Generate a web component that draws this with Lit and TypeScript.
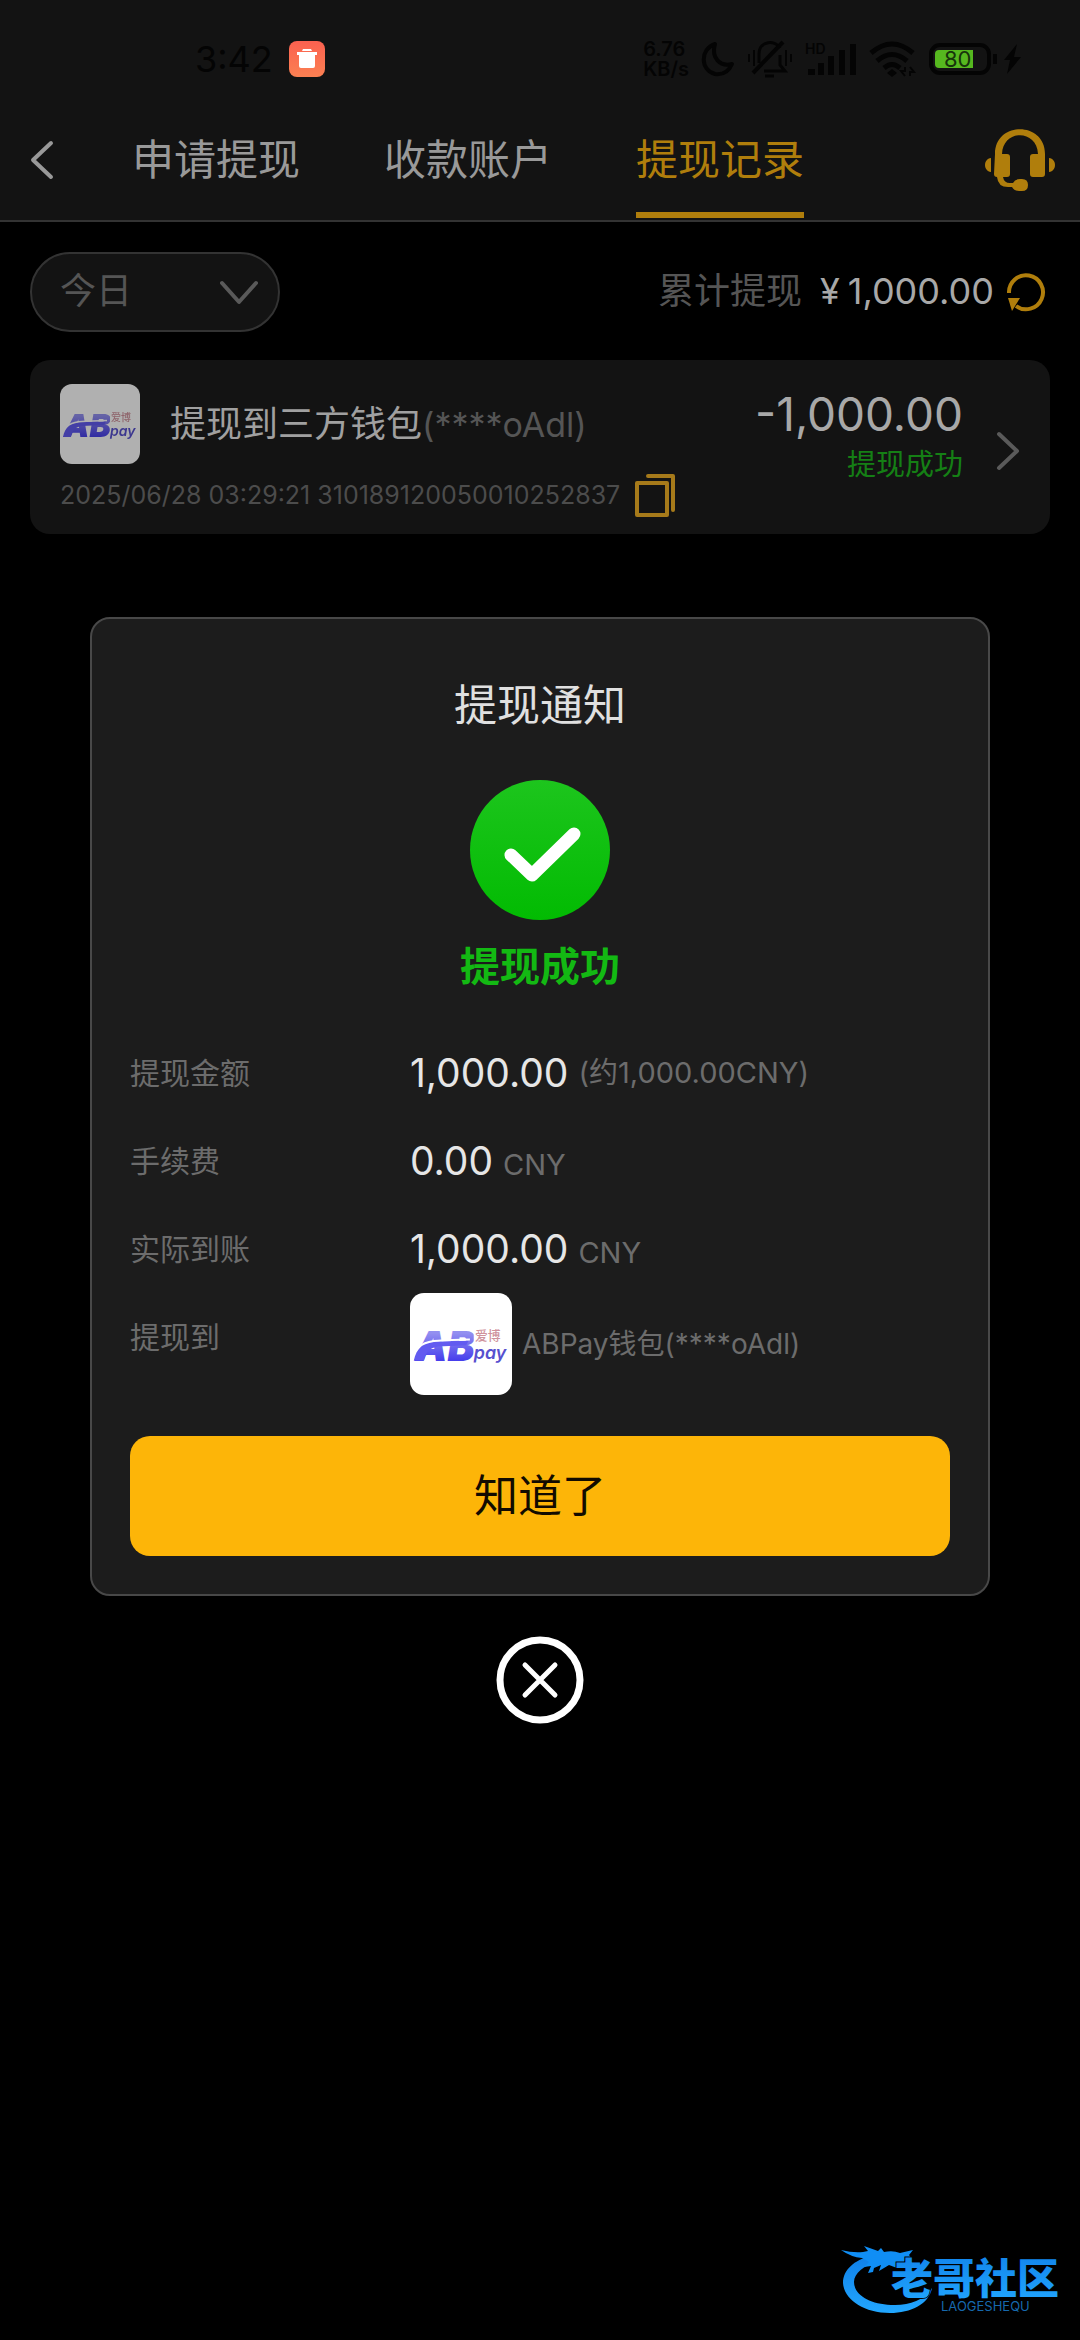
import { LitElement, html, css, nothing } from "lit";
import { customElement, property, state } from "lit/decorators.js";

/** Wallet brand tile. */
@customElement("wallet-logo")
class WalletLogo extends LitElement {
  static styles = css`
    :host { display: block; overflow: hidden; background: #fff; }
    svg { display: block; width: 100%; height: 100%; }
    .latin { font-family: "Inter", "Liberation Sans", sans-serif; font-style: italic; }
    .han { font-family: "Noto Sans CJK SC", sans-serif; }
  `;
  render() {
    return html`<svg viewBox="0 0 80 80" role="img" aria-label="ABPay">
      <defs>
        <linearGradient id="g" x1="0" y1="0" x2="0" y2="1">
          <stop offset="0.25" stop-color="#938ff0" />
          <stop offset="0.8" stop-color="#463eec" />
        </linearGradient>
      </defs>
      <text class="latin" x="4" y="53" font-size="32" font-weight="900" fill="url(#g)">AB</text>
      <path d="M3 53C5 43 11 38.500 20 38L46 37.500 44 41 22 42C15 43 12 47 11 53Z" fill="#625bf0" />
      <path d="M7 42.500C13 36.500 24 37 47 36.500" fill="none" stroke="#fff" stroke-width="1.500" />
      <rect x="50" y="24" width="27" height="34" fill="#fff" />
      <text class="han" x="51" y="37" font-size="10" font-weight="500" fill="#cf929c">爱博</text>
      <text class="latin" x="50" y="52" font-size="14" font-weight="600" fill="#5750cf">pay</text>
    </svg>`;
  }
}

interface Detail { label: string; value?: string; note: string; centred?: boolean; logo?: boolean; }

const TABS = ["申请提现", "收款账户", "提现记录"];

const DETAILS: Detail[] = [
  { label: "提现金额", value: "1,000.00", note: "(约1,000.00CNY)", centred: true },
  { label: "手续费", value: "0.00", note: "CNY" },
  { label: "实际到账", value: "1,000.00", note: "CNY" },
  { label: "提现到", note: "ABPay钱包(****oAdl)", logo: true },
];

@customElement("status-bar")
class StatusBar extends LitElement {
  static styles = css`
    :host {
      display: flex; align-items: center; height: 82px; padding: 18px 57px 0 195px;
      color: #040404; font-family: "Inter", sans-serif;
    }
    .time { font-size: 36px; line-height: 40px; }
    .app { width: 36px; height: 36px; margin-left: 16px; }
    .icons { display: flex; align-items: center; gap: 12px; margin-left: auto; }
    .rate { display: flex; flex-direction: column; font-size: 20px; line-height: 20px; font-weight: 600; }
    svg { display: block; overflow: visible; }
    .level { font-size: 22px; }
    .hd { font-size: 14px; font-weight: 600; }
  `;
  render() {
    return html`
      <span class="time">3:42</span>
      <svg class="app" viewBox="0 0 36 36" aria-hidden="true">
        <defs><linearGradient id="o" x1="0" y1="0" x2="0" y2="1"><stop offset="0" stop-color="#fb6150" /><stop offset="1" stop-color="#fb8052" /></linearGradient></defs>
        <rect width="36" height="36" rx="8" fill="url(#o)" />
        <path d="M14 8h8l1 2H13zM8 11h20v3h-2v11q0 2-2 2H12q-2 0-2-2V14H8z" fill="#fff" />
      </svg>
      <div class="icons">
        <div class="rate"><span>6.76</span><span>KB/s</span></div>
        <svg width="34" height="36" viewBox="0 0 34 36" fill="none" stroke="currentColor" stroke-width="4" stroke-linejoin="round"><path d="M14 3C-1 8-1 29 14 33c8 1 14-3 17-10C19 26 10 17 14 3z" /></svg>
        <svg width="46" height="40" viewBox="0 0 46 40" fill="none" stroke="currentColor" stroke-width="2">
          <path d="M2 15v8M7 11v16M39 11v16M44 15v8" />
          <path d="M12 24V15c0-14 17-14 21-6M33 16v10l5 6H17" stroke-width="3" /><path d="M6 34 36 3" stroke-width="4" /><path d="M18 37h9" stroke-width="3" />
        </svg>
        <svg width="52" height="40" viewBox="0 0 52 40" fill="currentColor">
          <text class="hd" x="0" y="15">HD</text>
          <path d="M3 30h7v6H3zM13 24h6v12h-6zM23 17h6v19h-6zM34 11h6v25h-6zM45 5h6v31h-6z" />
        </svg>
        <svg width="46" height="38" viewBox="0 0 46 38" fill="none" stroke="currentColor" stroke-width="5">
          <path d="M2 13Q23-5 44 13M8 21q15-13 30 0M15 28q8-7 16 0" /><path d="m23 29 5 4-5 4-5-4z" fill="currentColor" stroke="none" />
          <path d="m36 36-4-5h4v-4M41 27l4 5h-4v4" stroke-width="2" />
        </svg>
        <svg width="96" height="36" viewBox="0 0 96 36">
          <rect x="4" y="4" width="58" height="28" rx="9" fill="none" stroke="currentColor" stroke-width="4" />
          <path d="M12 9h34v18H12q-4 0-4-4V13q0-4 4-4z" fill="#56b81f" />
          <text class="level" x="17" y="26" fill="#17330b">80</text>
          <path d="M66 13h4v10h-4zM90 3 77 19h6l-3 14 14-17h-7l3-13z" fill="currentColor" />
        </svg>
      </div>`;
  }
}

@customElement("withdraw-dialog")
class WithdrawDialog extends LitElement {
  @property({ attribute: false }) details: Detail[] = [];

  static styles = css`
    :host {
      position: absolute; inset: 0; display: flex; flex-direction: column;
      align-items: center; justify-content: center; gap: 40px;
    }
    .panel {
      box-sizing: border-box; width: calc(100% - 180px); padding: 38px;
      border: 2px solid #484848; border-radius: 20px; background: #1c1c1c;
      display: flex; flex-direction: column; align-items: center;
    }
    .title { margin: 0; font-size: 43px; line-height: 96px; font-weight: 400; color: #e0e0e0; }
    .badge { width: 140px; height: 140px; margin-top: 27px; display: block; }
    .result { margin: 0; font-size: 40px; line-height: 94px; font-weight: 700; color: #13b913; }
    .rows { align-self: stretch; margin: 15px 0 41px; display: flex; flex-direction: column; }
    .row { display: grid; grid-template-columns: 280px 1fr; align-items: center; min-height: 88px; }
    .label { align-self: start; font-size: 30px; line-height: 88px; color: #6c6c6c; }
    .data { margin: 0; padding-top: 4px; display: flex; align-items: baseline; gap: 10px; font-size: 39px; line-height: 48px; color: #e6e6e6; }
    .data.centred { padding-top: 0; align-items: center; }
    .note { font-size: 29px; color: #6c6c6c; }
    .logo + .note { font-size: 28px; }
    .logo { width: 102px; height: 102px; border-radius: 14px; }
    .confirm {
      align-self: stretch; height: 120px; padding: 0 0 6px; border: 0; border-radius: 20px; background: #fdb508;
      color: #120b00; font: inherit; font-size: 44px; cursor: pointer;
    }
    .close { width: 88px; height: 88px; padding: 0; border: 0; background: none; cursor: pointer; }
    .close svg { display: block; }
  `;

  private dismiss() {
    this.dispatchEvent(new CustomEvent("dismiss"));
  }

  render() {
    return html`
      <section class="panel" role="dialog" aria-modal="true" aria-labelledby="title">
        <h2 class="title" id="title">提现通知</h2>
        <svg class="badge" viewBox="0 0 140 140" aria-hidden="true">
          <defs><linearGradient id="c" x1="0" y1="0" x2="0" y2="1"><stop offset="0" stop-color="#1dc51d" /><stop offset="1" stop-color="#02bb02" /></linearGradient></defs>
          <circle cx="70" cy="70" r="70" fill="url(#c)" />
          <path d="M41 75 62 95 104 54" fill="none" stroke="#fff" stroke-width="13" stroke-linecap="round" stroke-linejoin="round" />
        </svg>
        <p class="result">提现成功</p>
        <dl class="rows">
          ${this.details.map(
            (d) => html`<div class="row">
              <dt class="label">${d.label}</dt>
              <dd class="data ${d.centred || d.logo ? "centred" : ""}">
                ${d.logo ? html`<wallet-logo class="logo"></wallet-logo>` : nothing}
                ${d.value ? html`<span>${d.value}</span>` : nothing}
                <span class="note">${d.note}</span>
              </dd>
            </div>`
          )}
        </dl>
        <button class="confirm" @click=${this.dismiss}>知道了</button>
      </section>
      <button class="close" aria-label="关闭" @click=${this.dismiss}>
        <svg width="88" height="88" viewBox="0 0 88 88" fill="none" stroke="#fff" stroke-width="7" stroke-linecap="round">
          <circle cx="44" cy="44" r="40" /><path d="m29 29 30 30M59 29 29 59" stroke-width="5" />
        </svg>
      </button>`;
  }
}

@customElement("community-mark")
class CommunityMark extends LitElement {
  static styles = css`
    :host { display: block; }
    svg { display: block; width: 226px; height: 76px; overflow: visible; }
    .han { font-family: "Noto Sans CJK SC", sans-serif; font-weight: 900; font-size: 42px; }
    .latin { font-family: "Inter", sans-serif; font-size: 13px; }
  `;
  render() {
    return html`<svg viewBox="0 0 226 76" role="img" aria-label="老哥社区">
      <defs><linearGradient id="b" x1="0" y1="0" x2="0" y2="1"><stop offset="0" stop-color="#0f7fe8" /><stop offset="1" stop-color="#22a7ff" /></linearGradient></defs>
      <path d="M30 12C13 16 2 26 2 39 3 55 22 69 49 69 70 69 88 60 91 44 82 57 67 62 50 61 29 60 13 51 13 38 13 29 23 22 36 17Z" fill="url(#b)" />
      <path d="M0 6q12 3 22 2l5-1-4-5 14 5 3-3 3 4q9-2 16 1l13-3-4 5 3 4-8 2 7 4-5 2q-6-1-9 1l-8-3-10 6 2-6-7 3-1 4-5 1 3-7-7 1 5-5-7-4Q10 13 0 6z" fill="#108ef5" />
      <text class="han" x="50" y="50" fill="url(#b)" stroke="#000" stroke-width="2" paint-order="stroke">老哥社区</text>
      <text class="latin" x="100" y="67" fill="#1668ad">LAOGESHEQU</text>
    </svg>`;
  }
}

@customElement("app-root")
class AppRoot extends LitElement {
  @state() private tab = 2;
  @state() private open = true;

  static styles = css`
    :host {
      position: relative; display: flex; flex-direction: column; min-height: 100vh; background: #000;
      font-family: "Inter", "Noto Sans CJK SC", sans-serif;
    }
    button { padding: 0; border: 0; background: none; font: inherit; cursor: pointer; }
    svg { display: block; }
    .top { background: #131313; border-bottom: 2px solid #333; }
    .nav { display: flex; align-items: stretch; height: 120px; padding-right: 25px; }
    .back { width: 132px; padding-left: 30px; }
    .tabs { display: flex; gap: 84px; }
    .tab { position: relative; padding-bottom: 8px; font-size: 42px; color: #999; }
    .tab.active { color: #b07e0c; }
    .tab.active::after { content: ""; position: absolute; left: 0; right: 0; bottom: 2px; height: 6px; background: #b07e0c; }
    .service { margin-left: auto; }
    .content { flex: 1; display: flex; flex-direction: column; gap: 28px; padding: 30px; }
    .filters { display: flex; align-items: center; justify-content: space-between; }
    .range { position: relative; }
    .select {
      box-sizing: border-box; width: 250px; height: 80px; padding: 0 28px 2px; appearance: none;
      border: 2px solid #333; border-radius: 40px; background: #131313; color: #555;
      font: inherit; font-size: 36px;
    }
    .arrow { position: absolute; right: 22px; top: 28px; pointer-events: none; }
    .total { display: flex; align-items: center; gap: 12px; padding-right: 4px; font-size: 36px; line-height: 48px; color: #a8a8a8; }
    .text { display: flex; gap: 18px; padding-bottom: 2px; }
    .caption { color: #555; }
    .sum { display: flex; gap: 8px; }
    .card { display: flex; padding: 24px 30px 17px; border-radius: 20px; background: #131313; }
    .info { display: flex; flex-direction: column; gap: 9px; white-space: nowrap; }
    .target { display: flex; align-items: center; gap: 30px; font-size: 36px; line-height: 48px; color: #a0a0a0; }
    .logo { width: 80px; height: 80px; border-radius: 12px; filter: brightness(0.69); }
    .account { font-size: 34px; color: #555; }
    .meta { display: flex; align-items: center; gap: 14px; font-size: 25px; line-height: 44px; color: #4c4c4c; }
    .money { margin-left: auto; display: flex; flex-direction: column; align-items: flex-end; }
    .amount { font-size: 46px; line-height: 60px; color: #a8a8a8; }
    .state { font-size: 29px; line-height: 42px; color: #157f15; }
    .go { align-self: center; margin-left: 33px; }
    .mark { position: absolute; right: 13px; bottom: 20px; }
  `;

  render() {
    return html`
      <header class="top">
        <status-bar></status-bar>
        <nav class="nav">
          <button class="back" aria-label="返回">
            <svg width="24" height="40" viewBox="0 0 24 40" fill="none" stroke="#999" stroke-width="4" stroke-linecap="round" stroke-linejoin="round"><path d="M21 3 3 20l18 17" /></svg>
          </button>
          <div class="tabs">
            ${TABS.map((t, i) => html`<button class="tab ${i === this.tab ? "active" : ""}" @click=${() => (this.tab = i)}>${t}</button>`)}
          </div>
          <button class="service" aria-label="客服">
            <svg width="70" height="62" viewBox="0 0 70 62" fill="#b07e0c">
              <path d="M10 25C10-8 60-8 60 25v20q0 3-3 3H48q-3 0-3-3V28q0-3 3-3h5C52 0 18 0 17 25h5q3 0 3 3v17q0 3-3 3h-4q1 6 7 6h3q2-4 7-4h2q6 0 6 6t-6 6h-3q-5 0-7-4h-4q-10 0-11-10-3 0-3-3z" />
              <path d="M6 29v14C-2 42-2 30 6 29zM64 29v14c8-1 8-13 0-14z" />
            </svg>
          </button>
        </nav>
      </header>
      <main class="content">
        <div class="filters">
          <div class="range">
            <select class="select" aria-label="日期范围"><option>今日</option></select>
            <svg class="arrow" width="38" height="26" viewBox="0 0 38 26" fill="none" stroke="#5a5a5a" stroke-width="4" stroke-linecap="round" stroke-linejoin="round"><path d="m2 3 17 19L36 3" /></svg>
          </div>
          <div class="total">
            <div class="text">
              <span class="caption">累计提现</span>
              <span class="sum"><span>¥</span><span>1,000.00</span></span>
            </div>
            <button aria-label="刷新">
              <svg width="40" height="40" viewBox="0 0 40 40" fill="none" stroke="#b07e0c" stroke-width="4"><path d="M3 21A17 17 0 1 1 10 34" /><path d="M2 26h12L6 39z" fill="#b07e0c" stroke="none" /></svg>
            </button>
          </div>
        </div>
        <article class="card">
          <div class="info">
            <div class="target">
              <wallet-logo class="logo"></wallet-logo>
              <span>提现到三方钱包<span class="account">(****oAdl)</span></span>
            </div>
            <div class="meta">
              <span>2025/06/28 03:29:21 310189120050010252837</span>
              <button aria-label="复制">
                <svg width="42" height="44" viewBox="0 0 42 44" fill="none" stroke="#a67a1a" stroke-width="4" stroke-linejoin="round" stroke-linecap="round"><rect x="3" y="10" width="30" height="32" /><path d="M14 3h25v34" /></svg>
              </button>
            </div>
          </div>
          <div class="money">
            <span class="amount">-1,000.00</span>
            <span class="state">提现成功</span>
          </div>
          <button class="go" aria-label="查看详情">
            <svg width="24" height="40" viewBox="0 0 24 40" fill="none" stroke="#5a5a5a" stroke-width="4" stroke-linecap="round" stroke-linejoin="round"><path d="m3 3 18 17L3 37" /></svg>
          </button>
        </article>
      </main>
      ${this.open ? html`<withdraw-dialog .details=${DETAILS} @dismiss=${() => (this.open = false)}></withdraw-dialog>` : nothing}
      <community-mark class="mark"></community-mark>`;
  }
}
